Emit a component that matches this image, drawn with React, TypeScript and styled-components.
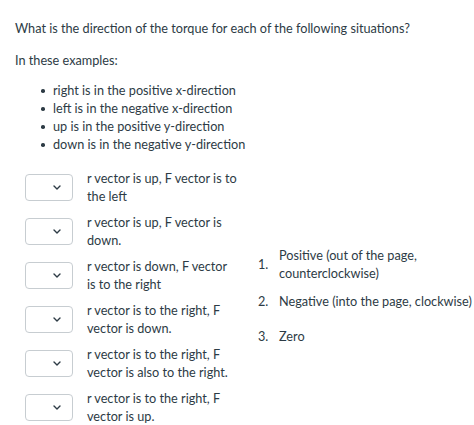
import React from "react";
import styled, { createGlobalStyle } from "styled-components";

const GlobalStyle = createGlobalStyle`
  body {
    margin: 0;
    background: #ffffff;
    font-family: Lato, "Liberation Sans", sans-serif;
    color: #2d3b45;
  }
`;

const situations = [
  "r vector is up, F vector is to the left",
  "r vector is up, F vector is down.",
  "r vector is down, F vector is to the right",
  "r vector is to the right, F vector is down.",
  "r vector is to the right, F vector is also to the right.",
  "r vector is to the right, F vector is up.",
];

const answers = [
  "Positive (out of the page, counterclockwise)",
  "Negative (into the page, clockwise)",
  "Zero",
];

const Chevron = () => (
  <svg width="8" height="5" viewBox="0 0 8 5" fill="none">
    <path d="M1 1 L4 4 L7 1" stroke="#2d3b45" strokeWidth="1.4" strokeLinecap="round" strokeLinejoin="round" />
  </svg>
);

export default function App() {
  return (
    <Page>
      <GlobalStyle />
      <Question>What is the direction of the torque for each of the following situations?</Question>
      <Intro>In these examples:</Intro>
      <Bullets>
        <li>right is in the positive x-direction</li>
        <li>left is in the negative x-direction</li>
        <li>up is in the positive y-direction</li>
        <li>down is in the negative y-direction</li>
      </Bullets>
      <Matching>
        <Prompts>
          {situations.map((s) => (
            <PromptRow key={s}>
              <Select>
                <Chevron />
              </Select>
              <PromptText>{s}</PromptText>
            </PromptRow>
          ))}
        </Prompts>
        <Answers>
          {answers.map((a, i) => (
            <AnswerItem key={a} $extra={i === 2}>
              <Num>{i + 1}.</Num>
              <AnswerText>{a}</AnswerText>
            </AnswerItem>
          ))}
        </Answers>
      </Matching>
    </Page>
  );
}

const Page = styled.div`
  padding: 19px 0 0 15px;
  font-size: 12.7px;
  line-height: 18px;
`;

const Question = styled.p`
  margin: 0;
`;

const Intro = styled.p`
  margin: 14px 0 0;
`;

const Bullets = styled.ul`
  margin: 12px 0 0;
  padding-left: 38px;
  list-style: none;
  li {
    display: flex;
    align-items: center;
  }
  li::before {
    content: "";
    width: 3.5px;
    height: 3.5px;
    border-radius: 50%;
    background: #2d3b45;
    margin-left: -12px;
    margin-right: 8.5px;
    margin-top: 2px;
    flex: none;
  }
`;

const Matching = styled.div`
  display: flex;
  align-items: center;
  margin-top: 16px;
  padding-left: 10px;
`;

const Prompts = styled.div`
  display: flex;
  flex-direction: column;
  gap: 8px;
  width: 233px;
  flex: none;
`;

const PromptRow = styled.div`
  display: flex;
  align-items: center;
  gap: 14px;
`;

const Select = styled.div`
  flex: none;
  width: 48px;
  height: 27px;
  box-sizing: border-box;
  border: 1px solid #c7cdd1;
  border-radius: 4px;
  display: flex;
  align-items: center;
  justify-content: flex-end;
  padding-right: 11px;
`;

const PromptText = styled.div`
  width: 150px;
`;

const Answers = styled.ol`
  list-style: none;
  margin: 0;
  padding: 0 0 4px;
  display: flex;
  flex-direction: column;
  gap: 10px;
`;

const AnswerItem = styled.li<{ $extra?: boolean }>`
  display: flex;
  align-items: center;
  margin-top: ${(p) => (p.$extra ? "7px" : "0")};
`;

const Num = styled.span`
  width: 21px;
  flex: none;
`;

const AnswerText = styled.span`
  width: 196px;
`;
